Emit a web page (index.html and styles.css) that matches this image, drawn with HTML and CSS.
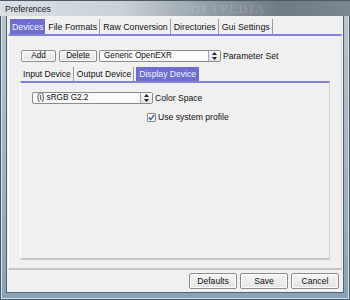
FILE: index.html
```html
<!DOCTYPE html>
<html lang="en">
<head>
  <meta charset="UTF-8">
  <title>Preferences</title>
  <link rel="stylesheet" href="styles.css">
</head>
<body>
  <div class="window">
    <!-- Title bar -->
    <div class="titlebar">
      <span class="title">Preferences</span>
      <span class="watermark">SOFTPEDIA</span>
    </div>

    <div class="client">
      <!-- Main tabs -->
      <div class="tabs">
        <span class="tab active">Devices</span>
        <span class="tab">File Formats</span>
        <span class="tab">Raw Conversion</span>
        <span class="tab">Directories</span>
        <span class="tab">Gui Settings</span>
      </div>

      <div class="panel">
        <div class="param-row">
          <button class="btn small add">Add</button>
          <button class="btn small">Delete</button>
          <div class="combo param-combo">
            <span class="combo-text">Generic OpenEXR</span>
            <span class="combo-arrow">
              <svg width="5" height="8" viewBox="0 0 5 8"><path d="M2.5 0L5 3H0z M2.5 8L0 5h5z" fill="#222"/></svg>
            </span>
          </div>
          <span class="label">Parameter Set</span>
        </div>

        <!-- Device tabs -->
        <div class="tabs subtabs">
          <span class="tab">Input Device</span>
          <span class="tab">Output Device</span>
          <span class="tab active">Display Device</span>
        </div>

        <div class="subpanel">
          <div class="space-row">
            <div class="combo space-combo">
              <span class="combo-text">(i) sRGB G2.2</span>
              <span class="combo-arrow">
                <svg width="5" height="8" viewBox="0 0 5 8"><path d="M2.5 0L5 3H0z M2.5 8L0 5h5z" fill="#222"/></svg>
              </span>
            </div>
            <span class="label">Color Space</span>
          </div>
          <div class="check-row">
            <span class="checkbox">
              <svg width="7" height="7" viewBox="0 0 7 7"><path d="M0.8 3.6L2.7 5.6L6.3 0.9" fill="none" stroke="#2a62c8" stroke-width="1.5"/></svg>
            </span>
            <span class="label">Use system profile</span>
          </div>
        </div>
      </div>

      <div class="footer">
        <button class="btn">Defaults</button>
        <button class="btn">Save</button>
        <button class="btn">Cancel</button>
      </div>
    </div>
  </div>
</body>
</html>
```

FILE: styles.css
```css
/* General */
body {
  margin: 0;
  padding: 0;
  background-color: #5d6870;
  font-family: "Liberation Sans", Arial, sans-serif;
  font-size: 8.6px;
  color: #111;
}

/* Window frame */
.window {
  width: 350px;
  height: 300px;
  box-sizing: border-box;
  display: flex;
  flex-direction: column;
  background: linear-gradient(to bottom, #b7c6d2, #9fb3c3 60%, #8aa2b5);
  box-shadow: inset 0 0 0 1px #4d5963, inset 0 0 0 2px #d5dfe7;
}

.titlebar {
  height: 16px;
  display: flex;
  align-items: center;
  padding-left: 5px;
  background: linear-gradient(to right, #d9e0e5 0%, #c9d1d7 35%, #8e99a2 62%, #6f7a83 80%, #7b868e 100%);
  border-top: 1px solid #4d5963;
  box-sizing: border-box;
  position: relative;
  overflow: hidden;
}

.title {
  font-size: 8.5px;
  color: #1a1a1a;
}

.watermark {
  position: absolute;
  left: 182px;
  top: 1px;
  font-family: "Liberation Serif", serif;
  font-size: 13px;
  line-height: 13px;
  font-weight: bold;
  letter-spacing: 1px;
  color: rgba(255, 255, 255, 0.14);
}

.client {
  flex: 1;
  margin: 0 7px 8px 7px;
  background-color: #f0f0f0;
  display: flex;
  flex-direction: column;
  box-shadow: 0 0 0 1px #56626c;
}

/* Tabs */
.tabs {
  display: flex;
  align-items: stretch;
  height: 15px;
  padding: 3px 0 0 3px;
  font-size: 8.8px;
}

.tab {
  display: flex;
  align-items: center;
  padding: 0 2px 0 1px;
  margin-right: 2px;
  border-right: 1px solid #9a9a9a;
  color: #111;
  white-space: nowrap;
}

.tab.active {
  background-color: #6e6ed0;
  color: #f4f4ff;
  border-right: none;
  padding: 0 2px;
  margin-right: 2px;
}

/* Outer panel */
.panel {
  flex: 1;
  margin: 0 1px;
  border-top: 2px solid #8181dc;
  border-left: 1px solid #ffffff;
  border-right: 1px solid #e2e2e2;
  border-bottom: 2px solid #c6c6c6;
  padding: 13px 11px 8px 11px;
  display: flex;
  flex-direction: column;
}

.param-row {
  display: flex;
  align-items: center;
  height: 13px;
  margin-left: 1px;
}

.label {
  white-space: nowrap;
  margin-left: 2px;
}

/* Buttons */
.btn {
  font-family: inherit;
  font-size: inherit;
  color: #111;
  background: linear-gradient(to bottom, #f6f6f6, #e3e3e3);
  border: 1px solid #8c8c8c;
  border-radius: 2px;
  box-shadow: inset 0 0 0 1px #fdfdfd;
  padding: 0;
  margin: 0;
}

.btn.small {
  width: 36px;
  height: 12px;
  line-height: 10px;
  font-size: 8.2px;
  margin-right: 3px;
}

.btn.small.add {
  width: 35px;
}

.btn.small + .btn.small {
  width: 38px;
  margin-right: 2px;
}

/* Combo boxes */
.combo {
  display: flex;
  align-items: stretch;
  height: 12px;
  box-sizing: border-box;
  background-color: #fafafa;
  border: 1px solid #8c8c8c;
  border-radius: 2px;
}

.combo-text {
  flex: 1;
  padding-left: 4px;
  line-height: 10px;
  font-size: 8.2px;
  white-space: nowrap;
  overflow: hidden;
}

.combo-arrow {
  width: 11px;
  display: flex;
  align-items: center;
  justify-content: center;
  border-left: 1px solid #a8a8a8;
  background: linear-gradient(to bottom, #f8f8f8, #e4e4e4);
}

.param-combo {
  width: 122px;
}

/* Sub tabs */
.subtabs {
  padding: 5px 0 0 2px;
  height: 14px;
  font-size: 8.6px;
}

.subtabs .tab.active {
  padding: 0 3px;
}

.subpanel {
  flex: 1;
  border-top: 2px solid #8181dc;
  border-left: 1px solid #ffffff;
  border-right: 1px solid #d2d2d2;
  border-bottom: 2px solid #c6c6c6;
  padding: 9px 11px;
}

.space-row {
  display: flex;
  align-items: center;
  height: 12px;
}

.space-combo {
  width: 121px;
}

.check-row {
  display: flex;
  align-items: center;
  margin: 8px 0 0 115px;
  height: 10px;
}

.checkbox {
  width: 9px;
  height: 9px;
  box-sizing: border-box;
  border: 1px solid #8a8a8a;
  border-radius: 1px;
  background-color: #fdfdfd;
  display: flex;
  align-items: center;
  justify-content: center;
}

/* Footer buttons */
.footer {
  display: flex;
  justify-content: flex-end;
  gap: 3px;
  padding: 3px 4px 3px 0;
}

.footer .btn {
  width: 48px;
  height: 16px;
}
```
